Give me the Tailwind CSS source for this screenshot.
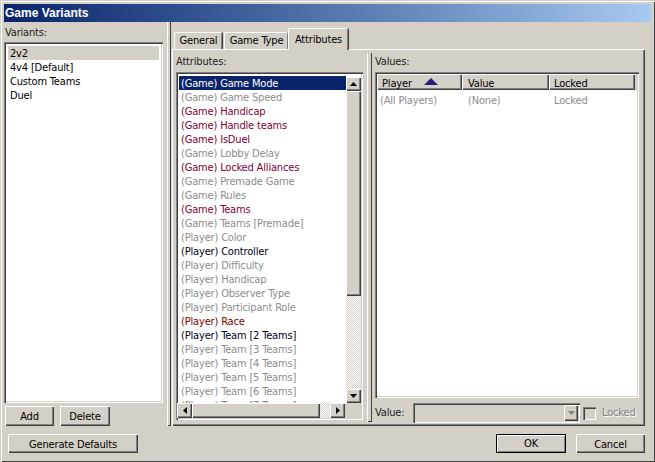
<!DOCTYPE html>
<html lang="en">
<head>
  <meta charset="UTF-8" />
  <title>Game Variants</title>
  <script src="https://cdn.jsdelivr.net/npm/@tailwindcss/browser@4"></script>
</head>
<body class="w-[655px] h-[462px] overflow-hidden bg-[#d4d0c8] text-[11px] leading-[16px] tracking-[-0.17px] text-black font-['DejaVu_Sans_Condensed','Liberation_Sans',sans-serif]">
<div class="w-[655px] h-[462px] flex flex-col pt-[4px] pl-[4px] pr-[4px] shadow-[inset_1px_1px_0_#d4d0c8,inset_2px_2px_0_#fff,inset_-1px_-1px_0_#404040]">

  <!-- Title bar -->
  <div class="h-[18px] w-[647px] shrink-0 flex items-center px-[1px] text-[12px] tracking-normal font-bold font-['Liberation_Sans',sans-serif] text-white bg-gradient-to-r from-[#0a246a] to-[#a6caf0]">Game Variants</div>

  <div class="flex h-[404px] shrink-0">
    <!-- Variants -->
    <div class="w-[163px] shrink-0 flex flex-col">
      <div class="h-[20px] pt-[3px] pl-[1px] text-[#222]">Variants:</div>
      <div class="w-[159px] h-[361px] bg-white p-[4px] shadow-[inset_1px_1px_0_#808080,inset_2px_2px_0_#404040,inset_-1px_-1px_0_#fff,inset_-2px_-2px_0_#d4d0c8]">
        <div class="h-[14px] bg-[#d4d0c8] pl-[2px]">2v2</div>
        <div class="h-[14px] pl-[2px]">4v4 [Default]</div>
        <div class="h-[14px] pl-[2px]">Custom Teams</div>
        <div class="h-[14px] pl-[2px]">Duel</div>
      </div>
      <div class="flex gap-[6px] mt-[3px] pl-[1px]">
        <button class="w-[49px] h-[20px] pt-[2px] bg-[#d4d0c8] shadow-[inset_1px_1px_0_#fff,inset_-1px_-1px_0_#404040,inset_-2px_-2px_0_#808080]">Add</button>
        <button class="w-[50px] h-[20px] pt-[2px] bg-[#d4d0c8] shadow-[inset_1px_1px_0_#fff,inset_-1px_-1px_0_#404040,inset_-2px_-2px_0_#808080]">Delete</button>
      </div>
    </div>

    <!-- Splitter -->
    <div class="w-[4px] h-[404px] shrink-0 shadow-[inset_1px_0_0_#fff,inset_-1px_0_0_#404040,inset_0_-1px_0_#404040]"></div>
    <div class="w-[1px] shrink-0"></div>

    <!-- Tabs -->
    <div class="w-[473px] shrink-0 flex flex-col">
      <div class="h-[27px] flex items-end pl-[2px] shrink-0">
        <div class="w-[48px] h-[17px] flex items-center justify-center border-l border-t border-white rounded-t-[2px] shadow-[inset_-1px_0_0_#808080,1px_0_0_#404040] mr-[2px]">General</div>
        <div class="w-[64px] h-[17px] flex items-center justify-center border-l border-t border-white rounded-t-[2px] shadow-[inset_-1px_0_0_#808080,1px_0_0_#404040]">Game Type</div>
        <div class="w-[60px] h-[22px] -mb-[1px] relative z-10 bg-[#d4d0c8] flex items-center justify-center border-l border-t border-white rounded-t-[2px] shadow-[inset_-1px_0_0_#808080,1px_0_0_#404040]">Attributes</div>
      </div>
      <div class="h-[377px] flex px-[3px] pb-[3px] border-t border-l border-white shadow-[inset_-1px_-1px_0_#404040,inset_-2px_-2px_0_#808080]">
        <!-- Attributes -->
        <div class="w-[187px] shrink-0 flex flex-col">
          <div class="h-[22px] pt-[4px] text-[#222]">Attributes:</div>
          <div class="relative w-[187px] h-[348px] bg-white p-[3px] pt-[4px] overflow-hidden shadow-[inset_1px_1px_0_#808080,inset_2px_2px_0_#404040,inset_-1px_-1px_0_#fff,inset_-2px_-2px_0_#d4d0c8]">
            <div class="w-[167px] h-[14px] pl-[2px] bg-[#0a246a] text-white">(Game) Game Mode</div>
            <div class="h-[14px] pl-[2px] text-[#8c8c8c]">(Game) Game Speed</div>
            <div class="h-[14px] pl-[2px] text-[#800038]">(Game) Handicap</div>
            <div class="h-[14px] pl-[2px] text-[#800038]">(Game) Handle teams</div>
            <div class="h-[14px] pl-[2px] text-[#800038]">(Game) IsDuel</div>
            <div class="h-[14px] pl-[2px] text-[#8c8c8c]">(Game) Lobby Delay</div>
            <div class="h-[14px] pl-[2px] text-[#800038]">(Game) Locked Alliances</div>
            <div class="h-[14px] pl-[2px] text-[#8c8c8c]">(Game) Premade Game</div>
            <div class="h-[14px] pl-[2px] text-[#8c8c8c]">(Game) Rules</div>
            <div class="h-[14px] pl-[2px] text-[#800038]">(Game) Teams</div>
            <div class="h-[14px] pl-[2px] text-[#8c8c8c]">(Game) Teams [Premade]</div>
            <div class="h-[14px] pl-[2px] text-[#8c8c8c]">(Player) Color</div>
            <div class="h-[14px] pl-[2px] text-[#000020]">(Player) Controller</div>
            <div class="h-[14px] pl-[2px] text-[#8c8c8c]">(Player) Difficulty</div>
            <div class="h-[14px] pl-[2px] text-[#8c8c8c]">(Player) Handicap</div>
            <div class="h-[14px] pl-[2px] text-[#8c8c8c]">(Player) Observer Type</div>
            <div class="h-[14px] pl-[2px] text-[#8c8c8c]">(Player) Participant Role</div>
            <div class="h-[14px] pl-[2px] text-[#800000]">(Player) Race</div>
            <div class="h-[14px] pl-[2px] text-[#000020]">(Player) Team [2 Teams]</div>
            <div class="h-[14px] pl-[2px] text-[#8c8c8c]">(Player) Team [3 Teams]</div>
            <div class="h-[14px] pl-[2px] text-[#8c8c8c]">(Player) Team [4 Teams]</div>
            <div class="h-[14px] pl-[2px] text-[#8c8c8c]">(Player) Team [5 Teams]</div>
            <div class="h-[14px] pl-[2px] text-[#8c8c8c]">(Player) Team [6 Teams]</div>
            <div class="h-[14px] pl-[2px] text-[#8c8c8c]">(Player) Team [7 Teams]</div>

            <!-- Vertical scrollbar -->
            <div class="absolute top-[5px] right-[2px] bottom-[17px] w-[15px] flex flex-col bg-[repeating-conic-gradient(#d4d0c8_0_25%,#fff_0_50%)] bg-[length:2px_2px]">
              <div class="h-[14px] shrink-0 bg-[#d4d0c8] flex items-center justify-center shadow-[inset_1px_1px_0_#fff,inset_-1px_-1px_0_#404040,inset_-2px_-2px_0_#808080]">
                <svg width="7" height="4" viewBox="0 0 7 4"><path d="M3.5 0L7 4H0z" fill="#000"/></svg>
              </div>
              <div class="h-[205px] shrink-0 bg-[#d4d0c8] shadow-[inset_1px_1px_0_#fff,inset_-1px_-1px_0_#404040,inset_-2px_-2px_0_#808080]"></div>
              <div class="flex-1"></div>
              <div class="h-[14px] shrink-0 bg-[#d4d0c8] flex items-center justify-center shadow-[inset_1px_1px_0_#fff,inset_-1px_-1px_0_#404040,inset_-2px_-2px_0_#808080]">
                <svg width="7" height="4" viewBox="0 0 7 4"><path d="M0 0H7L3.5 4z" fill="#000"/></svg>
              </div>
            </div>
            <!-- Horizontal scrollbar -->
            <div class="absolute left-[1px] right-[2px] bottom-[2px] h-[15px] bg-[#d4d0c8] flex">
              <div class="w-[15px] h-[15px] shrink-0 flex items-center justify-center shadow-[inset_1px_1px_0_#fff,inset_-1px_-1px_0_#404040,inset_-2px_-2px_0_#808080]">
                <svg width="4" height="7" viewBox="0 0 4 7"><path d="M4 0V7L0 3.5z" fill="#000"/></svg>
              </div>
              <div class="w-[128px] h-[15px] shrink-0 shadow-[inset_1px_1px_0_#fff,inset_-1px_-1px_0_#404040,inset_-2px_-2px_0_#808080]"></div>
              <div class="w-[10px] h-[15px] shrink-0 bg-[repeating-conic-gradient(#d4d0c8_0_25%,#fff_0_50%)] bg-[length:2px_2px]"></div>
              <div class="w-[15px] h-[15px] shrink-0 flex items-center justify-center shadow-[inset_1px_1px_0_#fff,inset_-1px_-1px_0_#404040,inset_-2px_-2px_0_#808080]">
                <svg width="4" height="7" viewBox="0 0 4 7"><path d="M0 0V7L4 3.5z" fill="#000"/></svg>
              </div>
            </div>
          </div>
        </div>

        <!-- Splitter -->
        <div class="w-[5px] h-[369px] mt-[3px] ml-[4px] shrink-0 shadow-[inset_1px_0_0_#fff,inset_-1px_0_0_#404040,inset_0_-1px_0_#404040]"></div>

        <!-- Values -->
        <div class="w-[265px] ml-[3px] shrink-0 flex flex-col">
          <div class="h-[22px] pt-[4px] text-[#222]">Values:</div>
          <div class="w-[264px] h-[326px] bg-white p-[2px] shadow-[inset_1px_1px_0_#808080,inset_2px_2px_0_#404040,inset_-1px_-1px_0_#fff,inset_-2px_-2px_0_#d4d0c8]">
            <div class="flex h-[16px] bg-[#d4d0c8]">
              <div class="w-[85px] flex items-start pt-[2px] pl-[5px] shadow-[inset_1px_1px_0_#fff,inset_-1px_-1px_0_#404040,inset_-2px_-2px_0_#808080]">Player
                <svg class="ml-[12px] mt-[2px]" width="14" height="7" viewBox="0 0 14 7"><path d="M7 0L14 7H0z" fill="#2a1a80"/></svg>
              </div>
              <div class="w-[87px] flex items-start pt-[2px] pl-[6px] shadow-[inset_1px_1px_0_#fff,inset_-1px_-1px_0_#404040,inset_-2px_-2px_0_#808080]">Value</div>
              <div class="w-[86px] flex items-start pt-[2px] pl-[5px] shadow-[inset_1px_1px_0_#fff,inset_-1px_-1px_0_#404040,inset_-2px_-2px_0_#808080]">Locked</div>
            </div>
            <div class="flex h-[14px] mt-[3px] text-[#8c8c8c]">
              <div class="w-[85px] pl-[3px]">(All Players)</div>
              <div class="w-[87px] pl-[6px]">(None)</div>
              <div class="pl-[5px]">Locked</div>
            </div>
          </div>
          <div class="flex items-center h-[20px] mt-[5px]">
            <div class="w-[38px] shrink-0 text-[#222]">Value:</div>
            <div class="w-[167px] h-[20px] shrink-0 flex justify-end items-center pr-[2px] shadow-[inset_1px_1px_0_#808080,inset_2px_2px_0_#404040,inset_-1px_-1px_0_#fff,inset_-2px_-2px_0_#d4d0c8]">
              <div class="w-[14px] h-[16px] flex items-center justify-center shadow-[inset_1px_1px_0_#fff,inset_-1px_-1px_0_#404040,inset_-2px_-2px_0_#808080]">
                <svg width="7" height="4" viewBox="0 0 7 4"><path d="M0 0H7L3.5 4z" fill="#808080"/></svg>
              </div>
            </div>
            <div class="w-[13px] h-[13px] ml-[3px] shrink-0 shadow-[inset_1px_1px_0_#808080,inset_2px_2px_0_#404040,inset_-1px_-1px_0_#fff]"></div>
            <div class="ml-[6px] text-[#808080] [text-shadow:1px_1px_0_#fff]">Locked</div>
          </div>
        </div>
      </div>
    </div>
  </div>

  <!-- Footer -->
  <div class="flex mt-[8px]">
    <button class="w-[130px] h-[19px] pt-[2px] ml-[4px] bg-[#d4d0c8] shadow-[inset_1px_1px_0_#fff,inset_-1px_-1px_0_#404040,inset_-2px_-2px_0_#808080]">Generate Defaults</button>
    <button class="w-[70px] h-[19px] pt-[1px] ml-[358px] bg-[#d4d0c8] border border-black shadow-[inset_1px_1px_0_#fff,inset_-1px_-1px_0_#808080]">OK</button>
    <button class="w-[69px] h-[19px] pt-[2px] ml-[10px] bg-[#d4d0c8] shadow-[inset_1px_1px_0_#fff,inset_-1px_-1px_0_#404040,inset_-2px_-2px_0_#808080]">Cancel</button>
  </div>
</div>
</body>
</html>
